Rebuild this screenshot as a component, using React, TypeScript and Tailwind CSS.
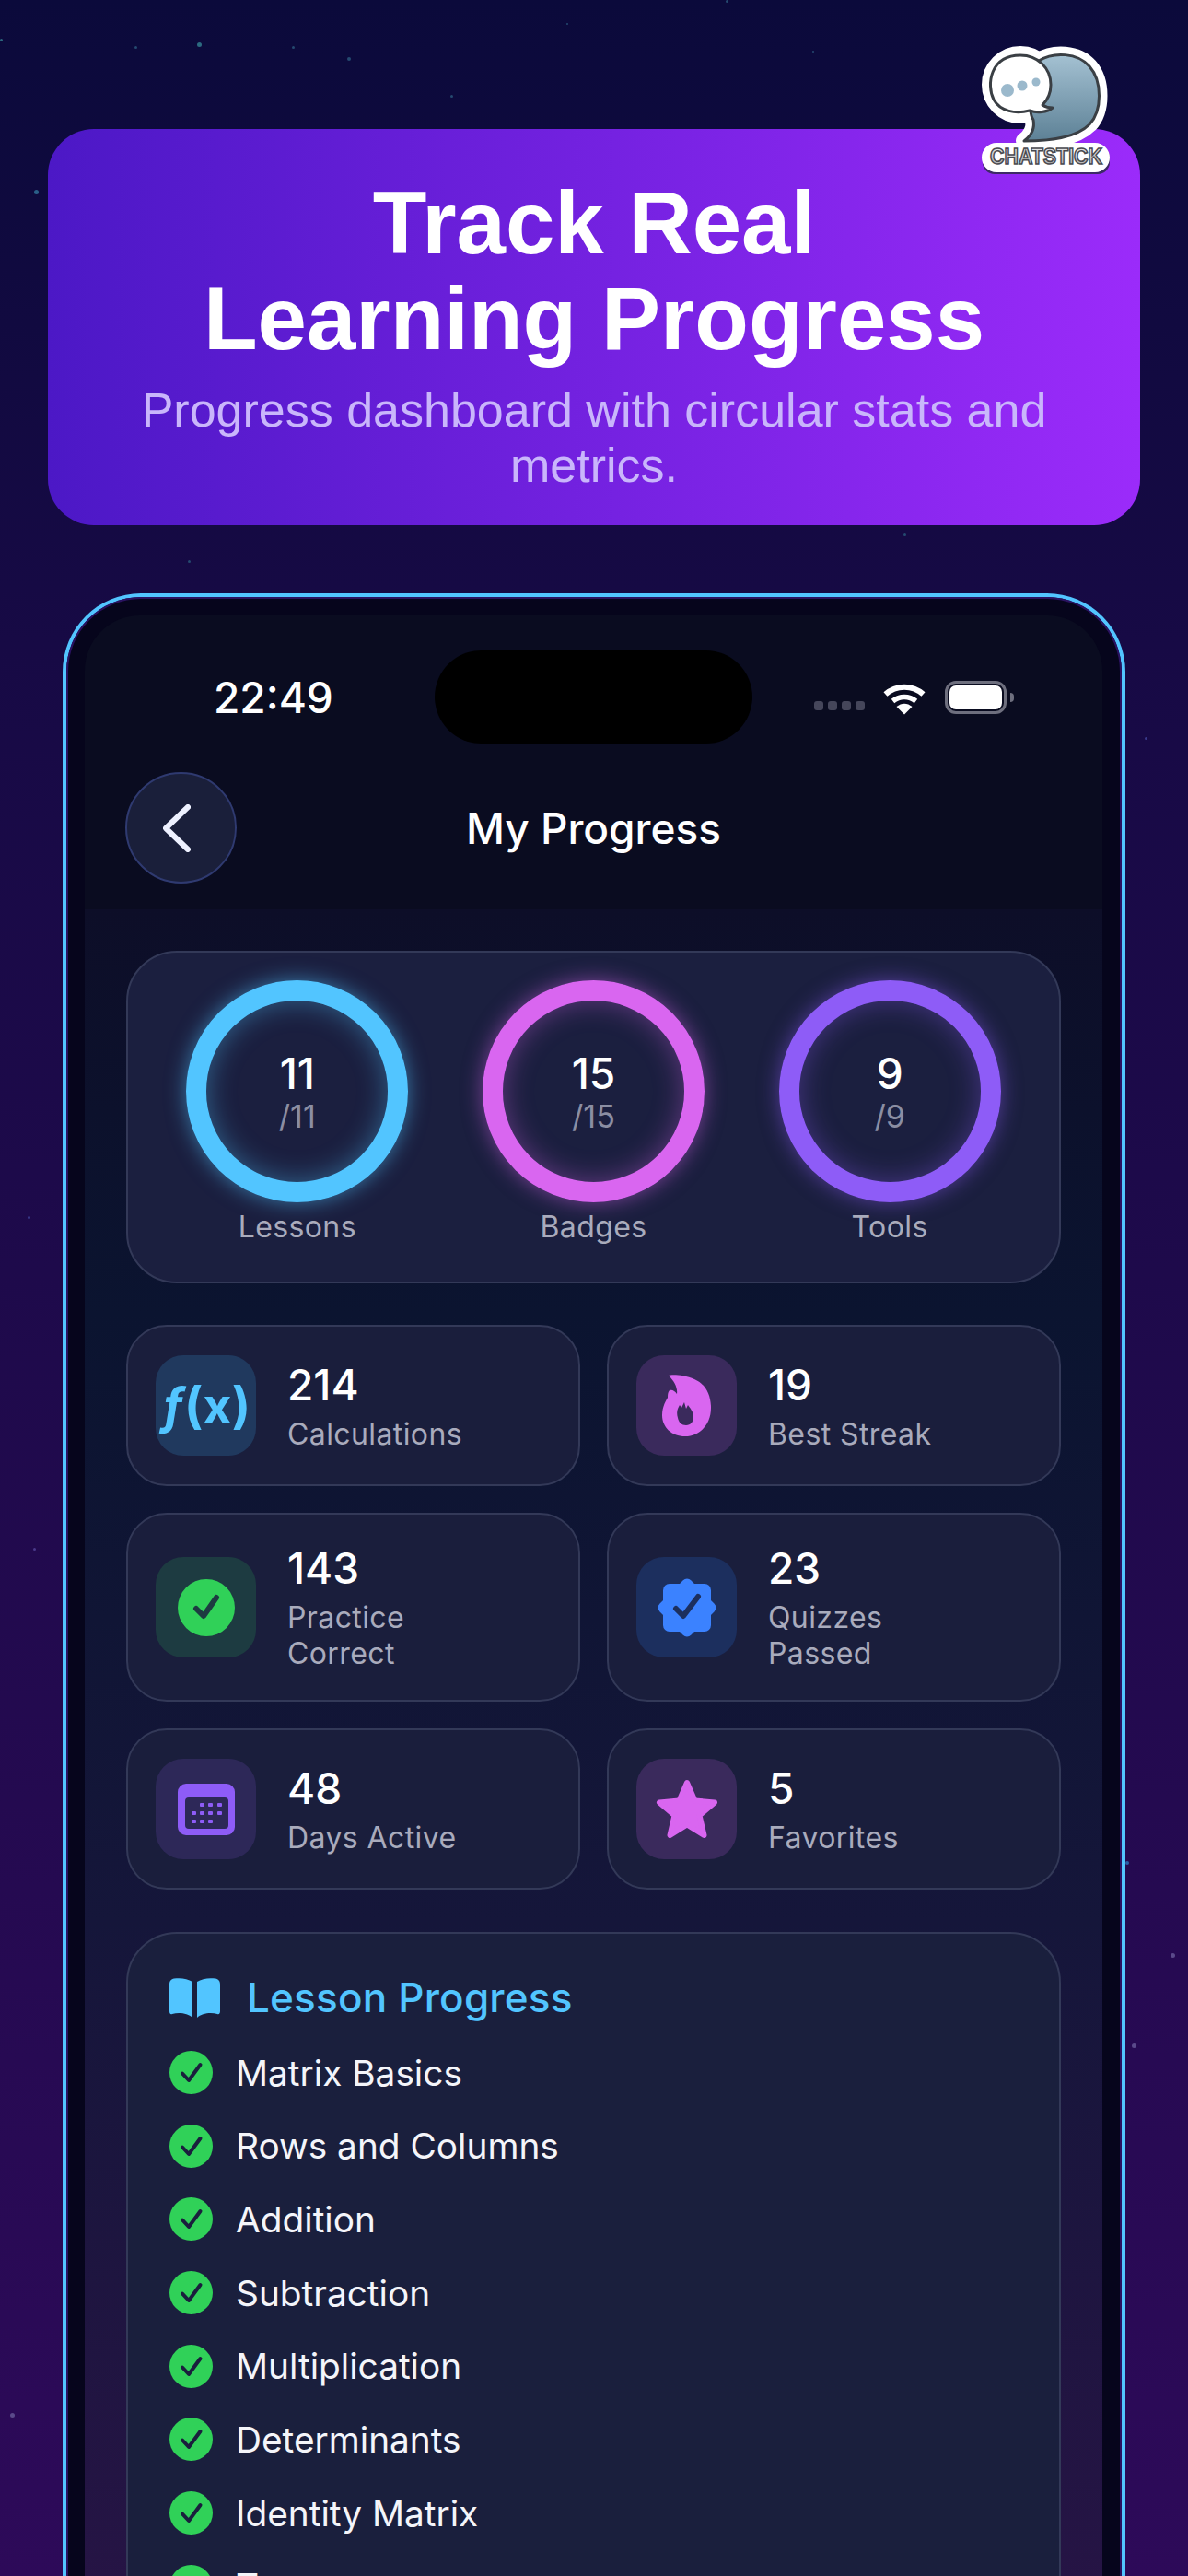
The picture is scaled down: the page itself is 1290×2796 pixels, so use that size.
import type { ReactNode } from "react";

const stars = [
  "left-[214px] top-[46px] size-[5px] bg-[#2c6a80]",
  "left-[377px] top-[62px] size-[4px] bg-[#254a70]",
  "left-[146px] top-[50px] size-[3px] bg-[#254a70]",
  "left-[317px] top-[50px] size-[3px] bg-[#254a70]",
  "left-[489px] top-[103px] size-[3px] bg-[#254a70]",
  "left-[615px] top-[25px] size-[2px] bg-[#254a70]",
  "left-[37px] top-[206px] size-[5px] bg-[#2a5f88]",
  "left-[882px] top-[55px] size-[2px] bg-[#254a70]",
  "left-[788px] top-[0px] size-[3px] bg-[#254a70]",
  "left-[0px] top-[42px] size-[3px] bg-[#2c6a80]",
  "left-[981px] top-[579px] size-[3px] bg-[#254a70]",
  "left-[204px] top-[608px] size-[3px] bg-[#254a70]",
  "left-[11px] top-[2619px] size-[5px] bg-[#5a4a8a]",
  "left-[1271px] top-[2120px] size-[5px] bg-[#5a4a8a]",
  "left-[1229px] top-[2218px] size-[5px] bg-[#5a4a8a]",
  "left-[1222px] top-[2020px] size-[4px] bg-[#2a5fa8]",
  "left-[1243px] top-[800px] size-[3px] bg-[#3a3a8a]",
  "left-[36px] top-[1680px] size-[3px] bg-[#4a3a8a]",
  "left-[30px] top-[1320px] size-[3px] bg-[#3a3a8a]",
];

const rings = [
  { value: "11", total: "/11", label: "Lessons", ring: "border-[#52c5ff] shadow-[0_0_22px_rgba(82,197,255,0.55),inset_0_0_30px_rgba(82,197,255,0.42)]" },
  { value: "15", total: "/15", label: "Badges", ring: "border-[#d966f0] shadow-[0_0_22px_rgba(217,102,240,0.5),inset_0_0_30px_rgba(217,102,240,0.38)]" },
  { value: "9", total: "/9", label: "Tools", ring: "border-[#8e5cf7] shadow-[0_0_22px_rgba(142,92,247,0.5),inset_0_0_30px_rgba(142,92,247,0.38)]" },
];

const lessons = [
  "Matrix Basics",
  "Rows and Columns",
  "Addition",
  "Subtraction",
  "Multiplication",
  "Determinants",
  "Identity Matrix",
  "Transpose",
];

const FxIcon = () => (
  <span className="font-[Inter,sans-serif] text-[54px] font-bold leading-none text-[#52c5ff]">
    <span className="italic">ƒ</span>(x)
  </span>
);

const FlameIcon = () => (
  <svg width="53" height="67" viewBox="0 0 53 67">
    <path
      fillRule="evenodd"
      fill="#d966f0"
      d="M7 1C10 -0.5 24 0 35 5C47 10 53 22 53 36C53 55 40 67 25 67C10 67 0 57 0 44C0 36 3 30 6 25C6 22 6 19 8 17C11 16 14 18 16 21C17 14 13 7 7 1ZM24 30L21 36L19 33C17 37 15 40 17 47C18 52 21 55 26 55C31 55 34 51 34 46C34 40 30 36 28 33L26 37Z"
    />
  </svg>
);

const CheckCircleIcon = () => (
  <svg width="62" height="62" viewBox="0 0 62 62">
    <circle cx="31" cy="31" r="31" fill="#30d158" />
    <path d="M20 32L28 40L42 20" fill="none" stroke="#1d3b41" strokeWidth="6" strokeLinecap="round" strokeLinejoin="round" />
  </svg>
);

const SealIcon = () => (
  <svg width="68" height="68" viewBox="0 0 68 68">
    <rect x="8" y="8" width="52" height="52" rx="7" fill="#3b82ff" />
    <rect x="10" y="10" width="48" height="48" rx="6" fill="#3b82ff" transform="rotate(45 34 34)" />
    <path d="M22 35L30 43L46 22" fill="none" stroke="#1c2f5e" strokeWidth="6" strokeLinecap="round" strokeLinejoin="round" />
  </svg>
);

const CalendarIcon = () => (
  <svg width="62" height="56" viewBox="0 0 62 56">
    <rect width="62" height="56" rx="9" fill="#8e5cf7" />
    <rect x="8" y="15" width="47" height="34" rx="4" fill="#2d2858" />
    {[
      [26, 21], [35, 21], [45, 21],
      [17, 30], [26, 30], [35, 30], [45, 30],
      [17, 39], [26, 39], [35, 39],
    ].map(([x, y]) => (
      <rect key={`${x}-${y}`} x={x - 2} y={y} width="5" height="4" rx="1" fill="#8e5cf7" />
    ))}
  </svg>
);

const StarIcon = () => (
  <svg width="68" height="66" viewBox="0 0 68 66">
    <path
      d="M34 4L42.5 23.5L64 25.5L47.5 39.5L52.5 61L34 49.5L15.5 61L20.5 39.5L4 25.5L25.5 23.5Z"
      fill="#d966f0"
      stroke="#d966f0"
      strokeWidth="6"
      strokeLinejoin="round"
    />
  </svg>
);

const BookIcon = () => (
  <svg width="55" height="43" viewBox="0 0 55 43">
    <path fill="#52c5ff" d="M0 7C0 3 2 1 5 0.5C12 -0.5 20 0.5 25 4V43C20 38 10 37 3 39C1 40 0 38 0 36ZM55 7C55 3 53 1 50 0.5C43 -0.5 35 0.5 30 4V43C35 38 45 37 52 39C54 40 55 38 55 36Z" />
  </svg>
);

const stats: { value: string; label: string; box: string; icon: ReactNode }[] = [
  { value: "214", label: "Calculations", box: "bg-[#20395e]", icon: <FxIcon /> },
  { value: "19", label: "Best Streak", box: "bg-[#3a2a5c]", icon: <FlameIcon /> },
  { value: "143", label: "Practice Correct", box: "bg-[#1d3b41]", icon: <CheckCircleIcon /> },
  { value: "23", label: "Quizzes Passed", box: "bg-[#1c2f5e]", icon: <SealIcon /> },
  { value: "48", label: "Days Active", box: "bg-[#2d2858]", icon: <CalendarIcon /> },
  { value: "5", label: "Favorites", box: "bg-[#3a2a5c]", icon: <StarIcon /> },
];

const ChatstickLogo = () => (
  <svg className="absolute left-[1040px] top-[30px]" width="200" height="170" viewBox="0 0 200 170">
    <defs>
      <linearGradient id="bubble" x1="0" y1="0" x2="0" y2="1">
        <stop offset="0" stopColor="#a4c1d2" />
        <stop offset="1" stopColor="#5d8196" />
      </linearGradient>
      <linearGradient id="label" x1="0" y1="0" x2="0" y2="1">
        <stop offset="0" stopColor="#f2f2f2" />
        <stop offset="1" stopColor="#a8a8a8" />
      </linearGradient>
    </defs>
    <rect x="27" y="128" width="138" height="31" rx="13" fill="#3d2a66" />
    <g fill="#fff" stroke="#fff" strokeWidth="18" strokeLinejoin="round">
      <path d="M88 36C104 26 130 27 143 42C157 58 157 90 143 105C128 120 100 123 72 123C80 117 84 110 82 100C75 90 80 50 88 36Z" />
      <circle cx="68" cy="62" r="33" />
      <rect x="35" y="134" width="121" height="14" rx="7" />
    </g>
    <path
      d="M88 36C104 26 130 27 143 42C157 58 157 90 143 105C128 120 100 123 72 123C80 117 84 110 82 100C75 90 80 50 88 36Z"
      fill="url(#bubble)"
      stroke="#3a3f44"
      strokeWidth="3"
      strokeLinejoin="round"
    />
    <path
      d="M68 30C87 30 101 44 101 62C101 71 98 78 92 84C95 86 99 87 103 87C97 92 86 93 78 90C63 94 46 91 39 78C31 62 35 30 68 30Z"
      fill="#fff"
      stroke="#3a3f44"
      strokeWidth="3"
      strokeLinejoin="round"
    />
    <circle cx="54" cy="68" r="7" fill="#9bb9cc" />
    <circle cx="70" cy="63" r="5.5" fill="#9bb9cc" />
    <circle cx="85" cy="59" r="4.5" fill="#9bb9cc" />
    <text
      x="35"
      y="148"
      textLength="122"
      lengthAdjust="spacingAndGlyphs"
      fontFamily="'Liberation Sans', sans-serif"
      fontWeight="700"
      fontSize="24"
      fill="url(#label)"
      stroke="#4a4a50"
      strokeWidth="1.6"
    >
      CHATSTICK
    </text>
  </svg>
);

const WifiIcon = () => (
  <svg width="46" height="35" viewBox="0 0 46 35" className="mb-[-1px]">
    <path d="M2.5 12.5C14 2 32 2 43.5 12.5" fill="none" stroke="#fff" strokeWidth="6" />
    <path d="M10.5 20C18 14 28 14 35.5 20" fill="none" stroke="#fff" strokeWidth="5.5" />
    <path d="M14.5 26C20 21.5 26 21.5 31.5 26L23 34.5Z" fill="#fff" />
  </svg>
);

const App = () => {
  return (
    <div className="relative h-[2796px] w-[1290px] overflow-hidden bg-[linear-gradient(180deg,#0b0a3b_0%,#170a45_25%,#240a50_70%,#2d0a59_100%)]">
      {stars.map((s) => (
        <div key={s} className={`absolute rounded-full ${s}`} />
      ))}

      {/* BANNER */}
      <div className="ml-[52px] mt-[140px] h-[430px] w-[1186px] rounded-[50px] bg-[linear-gradient(90deg,#4c18c6,#9b2bfa)] pt-[50px] text-center font-['Liberation_Sans',Arial,sans-serif]">
        <h1 className="text-[96px] font-bold leading-[104px] text-white">
          Track Real
          <br />
          Learning Progress
        </h1>
        <p className="mx-auto mt-[17px] w-[1040px] text-[52px] leading-[60px] text-[#c9b6fb]">
          Progress dashboard with circular stats and metrics.
        </p>
      </div>
      <ChatstickLogo />

      {/* PHONE */}
      <div className="ml-[68px] mt-[74px] w-[1154px] rounded-t-[85px] border-4 border-b-0 border-[#52c5ff]">
        <div className="rounded-t-[81px] border-2 border-b-0 border-[#2a1260] bg-[#06051c] pl-[18px] pr-[19px] pt-[18px]">
          <div className="overflow-hidden rounded-t-[60px] bg-[#0a0c20] font-[Inter,sans-serif] text-white">
            {/* STATUS BAR */}
            <div className="flex items-center pt-[38px]">
              <span className="ml-[140px] w-[240px] text-[46px] font-medium leading-[56px]">22:49</span>
              <div className="h-[101px] w-[345px] rounded-full bg-black" />
              <div className="ml-[67px] flex items-end">
                <div className="mb-[-18px] flex gap-[5px] self-center">
                  {[0, 1, 2, 3].map((d) => (
                    <div key={d} className="size-[10px] rounded-[3px] bg-[#45465a]" />
                  ))}
                </div>
                <div className="ml-[20px]">
                  <WifiIcon />
                </div>
                <div className="ml-[21px] flex items-center">
                  <div className="h-[36px] w-[67px] rounded-[12px] border-[3px] border-[#6e6f7e] p-[2px]">
                    <div className="h-full w-full rounded-[7px] bg-white" />
                  </div>
                  <div className="ml-[4px] h-[10px] w-[4px] rounded-r-full bg-[#6e6f7e]" />
                </div>
              </div>
            </div>

            {/* NAV */}
            <div className="mt-[31px] grid grid-cols-[121px_1fr_121px] items-center px-[44px] pb-[28px]">
              <div className="flex size-[121px] items-center justify-center rounded-full border-2 border-[#2f3a70] bg-[#1a1f3a]">
                <svg width="30" height="52" viewBox="0 0 30 52" className="-ml-[9px]">
                  <path d="M27 3L3 26L27 49" fill="none" stroke="#eef1ff" strokeWidth="6" strokeLinecap="round" strokeLinejoin="round" />
                </svg>
              </div>
              <h2 className="text-center text-[46px] font-medium leading-[60px]">My Progress</h2>
            </div>

            {/* CONTENT */}
            <div className="h-[1830px] bg-[linear-gradient(180deg,#0d0e28_0%,#0b1430_24%,#15163a_60%,#261445_100%)] px-[45px] pt-[45px]">
              {/* RINGS */}
              <div className="grid h-[361px] grid-cols-3 rounded-[55px] border-2 border-[#333958] bg-[#1b1f3f] px-[23px] pt-[30px]">
                {rings.map((r) => (
                  <div key={r.label} className="flex flex-col items-center">
                    <div className={`flex size-[241px] flex-col items-center justify-center rounded-full border-[22px] ${r.ring}`}>
                      <span className="mt-[1px] text-[46px] font-medium leading-[54px]">{r.value}</span>
                      <span className="text-[34px] leading-[40px] text-[#8b8ea3]">{r.total}</span>
                    </div>
                    <span className="mt-[7px] text-[32px] leading-[40px] tracking-[0.4px] text-[#a9abbc]">{r.label}</span>
                  </div>
                ))}
              </div>

              {/* STATS */}
              <div className="mt-[45px] grid grid-cols-2 gap-[29px]">
                {stats.map((s) => (
                  <div
                    key={s.label}
                    className="flex items-center gap-[34px] rounded-[44px] border-2 border-[#333958] bg-[#1a1e3c] px-[30px] py-[31px]"
                  >
                    <div className={`flex size-[109px] shrink-0 items-center justify-center rounded-[30px] ${s.box}`}>{s.icon}</div>
                    <div>
                      <div className="text-[46px] font-medium leading-[54px]">{s.value}</div>
                      <div className="mt-[7px] max-w-[210px] text-[32px] leading-[39px] tracking-[0.4px] text-[#a9abbc]">{s.label}</div>
                    </div>
                  </div>
                ))}
              </div>

              {/* LESSONS */}
              <div className="mt-[46px] rounded-[55px] border-2 border-[#333958] bg-[#1a1f3d] px-[45px] pb-[40px] pt-[39px]">
                <div className="flex h-[60px] items-center gap-[29px]">
                  <BookIcon />
                  <span className="text-[44px] font-medium leading-[60px] tracking-[0.2px] text-[#52c5ff]">Lesson Progress</span>
                </div>
                <div className="mt-[28px] flex flex-col gap-[32.7px]">
                  {lessons.map((l) => (
                    <div key={l} className="flex h-[47px] items-center gap-[25px]">
                      <svg width="47" height="47" viewBox="0 0 47 47" className="shrink-0">
                        <circle cx="23.5" cy="23.5" r="23.5" fill="#30d158" />
                        <path d="M14 24.5L21 32L33.5 15" fill="none" stroke="#1a1f3d" strokeWidth="4" strokeLinecap="round" strokeLinejoin="round" />
                      </svg>
                      <span className="text-[38.8px] leading-[48px] text-[#f4f5fa]">{l}</span>
                    </div>
                  ))}
                </div>
              </div>
            </div>
          </div>
        </div>
      </div>
    </div>
  );
};

export default App;
